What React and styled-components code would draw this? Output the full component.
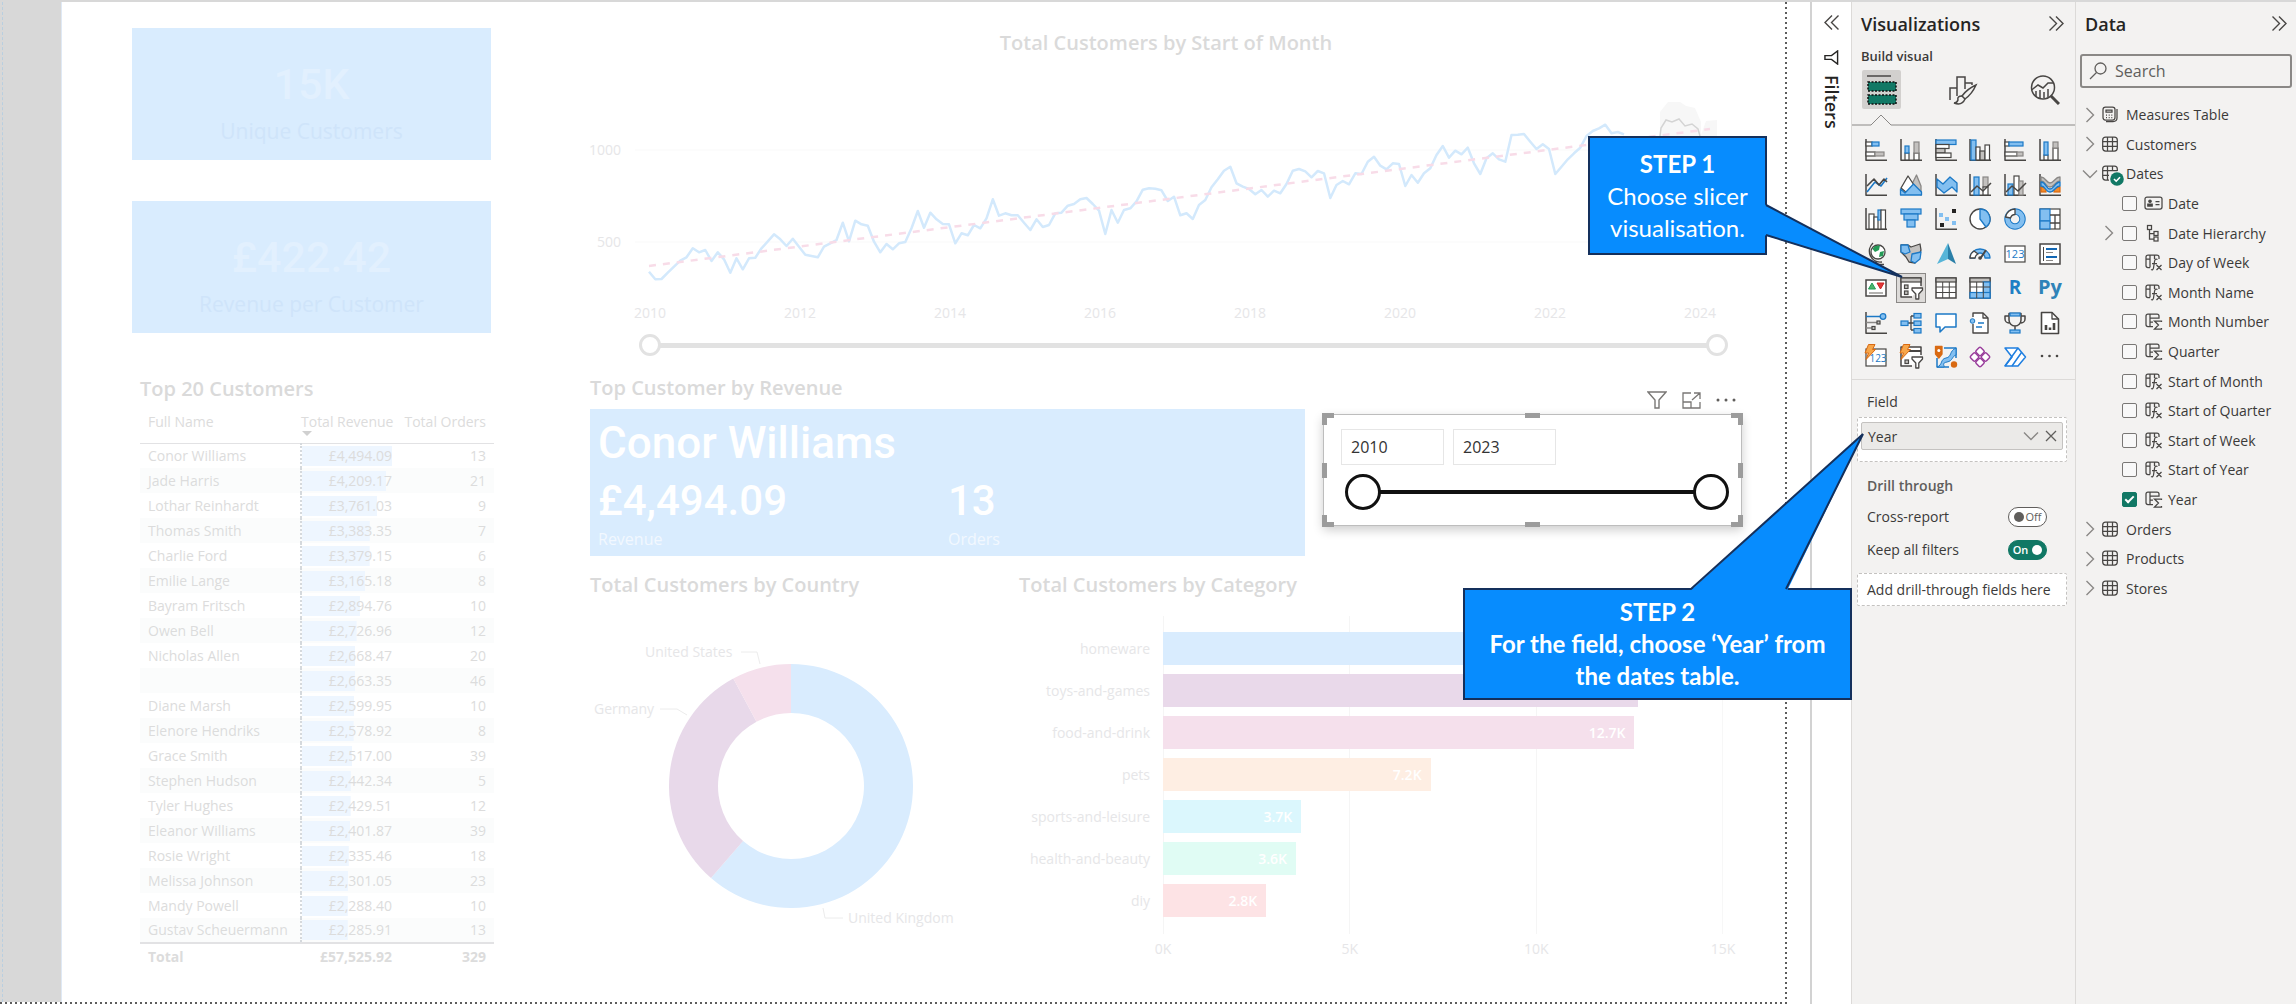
import React from 'react';
import styled, { createGlobalStyle } from 'styled-components';

const ui = '"Open Sans", "Noto Sans", sans-serif';
const din = 'Roboto, "Open Sans", sans-serif';

const c = {
  ink: '#3b3a39',
  pane: '#f3f2f1',
  rule: '#d8d8d8',
  faint: '#e6e6e8',
  fadedTitle: '#dadada',
  blue: '#d9ecfe',
  green: '#117865',
  callout: '#078cfe',
  navy: '#14305c',
};

const GlobalStyle = createGlobalStyle`
  *, *::before, *::after { box-sizing: border-box; }
  body { margin: 0; background: #fff; color: ${c.ink}; font-family: ${ui}; font-size: 14px; }
  button, input { font: inherit; color: inherit; }
  button { padding: 0; border: 0; background: none; display: grid; place-items: center; }
  h1, h2, h3, p, ul { margin: 0; padding: 0; }
  ul { list-style: none; }
`;

const Shell = styled.div`
  position: relative;
  display: flex;
  min-height: 100vh;
  border-top: 2px solid ${c.rule};
`;

/* ---------- report canvas ---------- */

const Canvas = styled.main`
  flex: 1;
  min-width: 0;
  display: flex;
  margin-right: 23px;
  background:
    repeating-linear-gradient(#5c5c5c 0 2px, transparent 2px 5px) right top / 2px 100% no-repeat,
    repeating-linear-gradient(90deg, #5c5c5c 0 2px, transparent 2px 5px) left bottom / 100% 2px no-repeat;
  padding: 0 2px 2px 0;
`;

const Gutter = styled.div`
  flex: none;
  width: 62px;
  background: #d8d8d8;
  border-right: 1px solid #dfe9f5;
  &::before {
    content: '';
    display: block;
    height: 100%;
    margin-left: 2px;
    border-left: 1px dashed #b9cfe0;
  }
`;

const Report = styled.div`
  flex: 1;
  min-width: 0;
  display: grid;
  grid-template-columns: 363px minmax(0, 1fr);
  column-gap: 95px;
  align-content: start;
  padding: 26px 43px 0 70px;
`;

const Title = styled.h2`
  font-size: 20px;
  line-height: 30px;
  font-weight: 600;
  color: ${c.fadedTitle};
  text-align: ${p => (p.$center ? 'center' : 'left')};
  white-space: nowrap;
`;

const Kpi = styled.section`
  height: 132px;
  width: 359px;
  margin-bottom: 41px;
  padding-top: 32px;
  background: ${c.blue};
  text-align: center;
  font-family: ${din};
`;

const KpiValue = styled.p`
  font-size: 43px;
  line-height: 48px;
  font-weight: 500;
  color: #e2f0fe;
`;

const KpiLabel = styled.p`
  margin-top: 11px;
  font-family: ${ui};
  font-size: 21px;
  line-height: 24px;
  color: #cfe4fa;
`;

const CustomerSection = styled.section`
  padding-left: 8px;
`;

const CustomerTable = styled.table`
  width: 354px;
  margin-top: 3px;
  border-collapse: collapse;
  table-layout: fixed;
  color: #dcdcdc;
  th, td { padding: 0 8px; font-weight: 400; text-align: right; white-space: nowrap; line-height: 18px; }
  th:first-child, td:first-child { text-align: left; }
  thead th { height: 36px; vertical-align: top; padding-top: 6px; }
  thead tr { border-bottom: 1px solid #e2e2e4; }
  tbody tr { height: 25px; }
  tbody tr:nth-child(even) { background: #fbfcfc; }
  tfoot tr { border-top: 2px solid #e2e2e4; height: 26px; }
  tfoot td { font-weight: 700; }
  tfoot td:nth-child(2) { padding: 0 4px 0 0; }
`;

const SortHead = styled.span`
  display: block;
  text-align: left;
  line-height: 18px;
  &::after {
    content: '';
    display: block;
    width: 0;
    margin-left: 1px;
    border: 5px solid transparent;
    border-top-color: #d0d0d0;
    border-bottom: 0;
  }
`;

const RevenueHead = styled.th`
  && { padding-left: 0; padding-right: 0; }
`;

const RevenueCell = styled.td`
  && { padding: 0 4px 0 0; }
  border-left: 2px dotted #d5d9dd;
`;

const DataBar = styled.div`
  height: 20px;
  line-height: 20px;
  background: linear-gradient(#eef6ff, #eef6ff) left / 0 100% no-repeat;
`;

const MainColumn = styled.div`
  min-width: 0;
`;

const ChartSvg = styled.svg`
  display: block;
  width: 100%;
  height: ${p => p.$h}px;
  overflow: visible;
  text { font-family: ${ui}; font-size: 14px; fill: ${c.faint}; }
`;

const RangeBox = styled.div`
  position: relative;
  display: grid;
  align-items: center;
  height: ${p => p.$size}px;
  margin: ${p => p.$margin};
  &::before {
    content: '';
    grid-area: 1 / 1;
    height: ${p => p.$track}px;
    margin: 0 ${p => p.$size / 2}px;
    background: ${p => p.$color};
  }
`;

const Range = styled.input`
  grid-area: 1 / 1;
  appearance: none;
  width: 100%;
  height: 100%;
  margin: 0;
  background: transparent;
  pointer-events: none;
  z-index: 1;
  &::-webkit-slider-thumb {
    appearance: none;
    pointer-events: auto;
    width: ${p => p.$size}px;
    height: ${p => p.$size}px;
    border-radius: 50%;
    border: 3px solid ${p => p.$color};
    background: #fff;
  }
`;

const MiddleRow = styled.div`
  display: grid;
  grid-template-columns: minmax(0, 1fr) 419px;
  column-gap: 18px;
  margin-top: 17px;
`;

const CustomerCard = styled.div`
  display: grid;
  grid-template-columns: 350px 1fr;
  align-content: start;
  height: 147px;
  margin-top: 6px;
  padding: 8px 8px 0;
  background: ${c.blue};
  font-family: ${din};
`;

const BigText = styled.p`
  grid-column: ${p => (p.$wide ? '1 / -1' : 'auto')};
  font-size: ${p => (p.$wide ? 44 : 42)}px;
  line-height: ${p => (p.$wide ? 52 : 64)}px;
  font-weight: 500;
  color: #fff;
`;

const SmallText = styled.p`
  font-family: ${ui};
  font-size: 16px;
  line-height: 12px;
  color: #f2f8ff;
`;

const VisualHeader = styled.div`
  display: flex;
  justify-content: flex-end;
  align-items: center;
  gap: 15px;
  height: 41px;
  padding: 13px 6px 0 0;
`;

const Slicer = styled.section`
  position: relative;
  height: 112px;
  padding: 14px 12px 0 17px;
  background: #fff;
  border: 1px solid #bdbdbd;
  box-shadow: 0 4px 10px rgba(0, 0, 0, 0.2);
`;

const YearInputs = styled.div`
  display: flex;
  gap: 9px;
`;

const YearInput = styled.input`
  width: 103px;
  height: 36px;
  padding: 0 9px;
  border: 1px solid #e6e6e6;
  font-size: 16px;
  color: #333;
  outline: 0;
`;

const Handles = styled.svg`
  position: absolute;
  left: -2px;
  top: -2px;
  width: calc(100% + 4px);
  height: calc(100% + 4px);
  pointer-events: none;
`;

const BottomRow = styled.div`
  display: grid;
  grid-template-columns: 429px minmax(0, 1fr);
  margin-top: 14px;
`;

const Plot = styled.div`
  display: flex;
  flex-direction: column;
  gap: 9px;
  height: 318px;
  margin: 16px 19px 0 144px;
  padding-top: 16px;
  border-right: 1px solid #f7f7f7;
  background: repeating-linear-gradient(90deg, #f5f5f5 0 1px, transparent 1px calc(100% / 3));
`;

const PlotRow = styled.div`
  display: flex;
  align-items: center;
  height: 33px;
  margin-left: -144px;
`;

const PlotLabel = styled.span`
  flex: none;
  width: 131px;
  margin-right: 13px;
  text-align: right;
  color: ${c.faint};
`;

const PlotBar = styled.div`
  height: 33px;
  line-height: 33px;
  padding-right: 9px;
  text-align: right;
  font-weight: 600;
  color: #fff;
  background: ${p => p.$color};
`;

const PlotAxis = styled.div`
  display: flex;
  justify-content: space-between;
  margin: 5px 19px 0 144px;
  line-height: 20px;
  color: ${c.faint};
  span { display: flex; justify-content: center; width: 0; }
`;

/* ---------- panes ---------- */

const Filters = styled.aside`
  flex: none;
  width: 41px;
  display: flex;
  flex-direction: column;
  align-items: center;
  border-left: 2px solid #d2d2d2;
  padding-top: 13px;
  background: #fff;
`;

const FiltersTitle = styled.h2`
  writing-mode: vertical-rl;
  margin-top: 10px;
  font-size: 18px;
  line-height: 24px;
  font-weight: 600;
  color: #252423;
`;

const FilterGlyph = styled.svg`
  margin-top: 20px;
`;

const Pane = styled.aside`
  flex: none;
  width: ${p => p.$w}px;
  border-left: 1px solid #dcdad8;
  background: ${c.pane};
`;

const PaneHeader = styled.div`
  display: flex;
  justify-content: space-between;
  align-items: center;
  height: 43px;
  padding: 0 ${p => p.$end}px 0 9px;
`;

const PaneTitle = styled.h2`
  font-size: 18px;
  font-weight: 600;
  color: #252423;
`;

const SubTitle = styled.h3`
  padding-left: 9px;
  margin-top: 1px;
  font-size: 13px;
  line-height: 20px;
  font-weight: 600;
`;

const Tabs = styled.div`
  display: flex;
  justify-content: space-between;
  padding: 4px 11px 0 10px;
`;

const Tab = styled.button`
  width: 39px;
  height: 39px;
  border-radius: 2px;
  background: ${p => (p.$active ? '#d2d0ce' : 'transparent')};
`;

const Notch = styled.svg`
  display: block;
  width: 100%;
  height: 12px;
  margin-top: 5px;
  overflow: visible;
`;

const IconGrid = styled.div`
  display: grid;
  grid-template-columns: repeat(6, 22px);
  grid-auto-rows: 22px;
  justify-content: space-between;
  align-content: space-between;
  height: 229px;
  margin: 13px 14px 11px 13px;
`;

const VizButton = styled.button`
  outline: ${p => (p.$selected ? '1px solid #8a8886' : 'none')};
  outline-offset: 3px;
  background: ${p => (p.$selected ? '#dddbd9' : 'transparent')};
  box-shadow: ${p => (p.$selected ? '0 0 0 3px #dddbd9' : 'none')};
`;

const FieldArea = styled.div`
  padding: 10px 8px 0 5px;
  border-top: 1px solid #dcdad8;
`;

const FieldLabel = styled.h3`
  padding-left: 10px;
  font-size: 14px;
  line-height: 24px;
  font-weight: ${p => (p.$bold ? 600 : 400)};
  color: ${p => (p.$bold ? '#605e5c' : c.ink)};
  margin: ${p => (p.$bold ? '12px 0 2px' : 0)};
`;

const Well = styled.div`
  min-height: ${p => p.$h}px;
  margin-top: ${p => p.$top}px;
  padding: 4px 3px;
  border: 1px dashed #c4c2c0;
  border-radius: 2px;
  background: #fff;
`;

const Chip = styled.div`
  display: flex;
  align-items: center;
  gap: 5px;
  height: 28px;
  padding: 0 4px 0 6px;
  border: 1px solid #c4c2c0;
  border-radius: 2px;
  background: #ebeae8;
  span { flex: 1; }
`;

const Placeholder = styled.p`
  padding-left: 6px;
  line-height: 23px;
  white-space: nowrap;
`;

const ToggleRow = styled.label`
  display: flex;
  justify-content: space-between;
  align-items: center;
  height: 33px;
  padding: 0 20px 0 10px;
`;

const HiddenCheck = styled.input`
  position: absolute;
  opacity: 0;
  width: 1px;
  height: 1px;
`;

const Track = styled.span`
  display: flex;
  flex-direction: ${p => (p.$on ? 'row-reverse' : 'row')};
  align-items: center;
  justify-content: center;
  gap: ${p => (p.$on ? 4 : 2)}px;
  width: 39px;
  height: 20px;
  border: 1px solid ${p => (p.$on ? c.green : '#605e5c')};
  border-radius: 10px;
  background: ${p => (p.$on ? c.green : '#fff')};
  color: ${p => (p.$on ? '#fff' : '#605e5c')};
  font-size: 11px;
  font-weight: ${p => (p.$on ? 600 : 400)};
  &::before {
    content: '';
    width: 10px;
    height: 10px;
    border-radius: 50%;
    background: ${p => (p.$on ? '#fff' : '#605e5c')};
  }
`;

const SearchBox = styled.label`
  display: flex;
  align-items: center;
  gap: 8px;
  height: 34px;
  margin: 9px 4px 12px 4px;
  padding-left: 7px;
  border: 2px solid #8a8886;
  border-radius: 3px;
  background: ${c.pane};
  input { flex: 1; min-width: 0; padding: 0; border: 0; outline: 0; background: transparent; font-size: 16px; }
  input::placeholder { color: #605e5c; opacity: 1; }
`;

const Tree = styled.ul`
  display: grid;
  grid-auto-rows: 1fr;
  height: 503px;
`;

const TreeRow = styled.li`
  display: flex;
  align-items: center;
  padding-left: ${p => (p.$child ? 24 : 5)}px;
  white-space: nowrap;
`;

const Chevron = styled.button`
  width: 18px;
  height: 20px;
`;

const TreeName = styled.span`
  display: flex;
  align-items: center;
  gap: 7px;
  margin-left: 3px;
`;

const FieldName = styled.label`
  display: flex;
  align-items: center;
  gap: 6px;
  margin-left: 4px;
  input + svg { margin-left: 2px; }
`;

const Check = styled.input`
  appearance: none;
  width: 15px;
  height: 15px;
  margin: 0;
  border: 1px solid #797775;
  border-radius: 2px;
  background: #f8f8f8;
  &:checked {
    border-color: ${c.green};
    background: ${c.green};
    display: grid;
    place-items: center;
  }
  &:checked::after {
    content: '';
    width: 9px;
    height: 5px;
    border: solid #fff;
    border-width: 0 0 2px 2px;
    transform: translateY(-1px) rotate(-45deg);
  }
`;

/* ---------- callouts ---------- */

const Callout = styled.div`
  position: absolute;
  z-index: 5;
  top: ${p => p.$top}px;
  right: ${p => p.$right}px;
  width: ${p => p.$w}px;
  height: ${p => p.$h}px;
  padding-top: ${p => p.$pad}px;
  border: 2px solid ${c.navy};
  background: ${c.callout};
  color: #fff;
  font-family: Lato, "Open Sans", sans-serif;
  font-size: 24px;
  line-height: 32px;
  text-align: center;
  font-weight: ${p => (p.$bold ? 700 : 400)};
  strong { display: block; font-weight: 700; }
`;

const Pointer = styled.svg`
  position: absolute;
  top: 0;
  left: ${p => (p.$side ? '100%' : 0)};
  width: 10px;
  height: 10px;
  overflow: visible;
  pointer-events: none;
`;

/* ---------- icons ---------- */

const K = '#484644';
const B = '#83bff0';
const BS = '#1c79c6';
const G = '#c3c1bf';

const Rc = ({ b, f = 'none', s = K, w = 1.2 }) => (
  <rect x={b[0]} y={b[1]} width={b[2]} height={b[3]} fill={f} stroke={s} strokeWidth={w} />
);
const Pt = ({ d, f = 'none', s = K, w = 1.3 }) => (
  <path d={d} fill={f} stroke={s} strokeWidth={w} strokeLinejoin="round" />
);
const Axis = () => <Pt d="M1 0V21.3H22" w={1.5} />;
const Bolt = () => <Pt d="M3.500-1.500H10L7.500 3.500H10.500L1 13.500L3.500 7H0Z" f="#f7a64a" s="#d96a12" w={1} />;
const Funnel = ({ x = 0, y = 0 }) => (
  <g transform={`translate(${x} ${y})`}>
    <Pt d="M0 0H10.500V2L6.800 6V11H3.800V6L0 2Z" f="#fff" />
  </g>
);

const vizIcons = [
  ['Stacked bar chart', <><Axis /><Rc b={[1, 3, 6, 4]} f="#fff" /><Rc b={[7, 3, 7, 4]} f={B} s={BS} /><Rc b={[1, 13, 9, 4]} f="#fff" /><Rc b={[10, 13, 9, 4]} f={G} s="#8a8886" /></>],
  ['Stacked column chart', <><Axis /><Rc b={[5, 14, 4, 7]} f="#fff" /><Rc b={[5, 7, 4, 7]} f={B} s={BS} /><Rc b={[14, 14, 5, 7]} f="#fff" /><Rc b={[14, 3, 5, 11]} f={G} s="#8a8886" /></>],
  ['Clustered bar chart', <><Axis /><Rc b={[1, 1, 20, 4.5]} f={B} s={BS} /><Rc b={[1, 5.5, 13, 4]} f="#fff" /><Rc b={[1, 9.5, 9, 4.5]} f={G} /><Rc b={[1, 14, 15, 4.5]} f="#fff" /></>],
  ['Clustered column chart', <><Axis /><Rc b={[2, 1, 5, 20]} f={B} s={BS} /><Rc b={[7, 8, 4, 13]} f="#fff" /><Rc b={[11, 12, 5, 9]} f={G} /><Rc b={[16, 6, 4.5, 15]} f="#fff" /></>],
  ['100% stacked bar chart', <><Axis /><Rc b={[1, 3, 4, 4]} f="#fff" /><Rc b={[5, 3, 14, 4]} f={B} s={BS} /><Rc b={[1, 13, 12, 4]} f="#fff" /><Rc b={[13, 13, 6, 4]} f={G} s="#8a8886" /></>],
  ['100% stacked column chart', <><Axis /><Rc b={[5, 16, 4, 5]} f="#fff" /><Rc b={[5, 3, 4, 13]} f={B} s={BS} /><Rc b={[14, 9, 5, 12]} f="#fff" /><Rc b={[14, 3, 5, 6]} f={G} s="#8a8886" /></>],
  ['Line chart', <><Axis /><Pt d="M2 18L10 8L16 12L22 4" s={BS} w={1.6} /><Pt d="M2 12L9 5L14 11L19 5L22 8" w={1.6} /></>],
  ['Area chart', <><Pt d="M10 14L16.500 1L21 12V21Z" f={G} s="#8a8886" /><Pt d="M1 14L8 2L14 11L7 19Z" f="#fff" /><Pt d="M0.500 21V15L5 19L13.500 10L21.500 18V21Z" f={B} s={BS} /></>],
  ['Stacked area chart', <><Axis /><Pt d="M2 5L8 10L15 3L22 9V18L17 13L9 19L2 13Z" f={B} s={BS} /></>],
  ['Line and stacked column chart', <><Axis /><Rc b={[5, 3, 5, 18]} f={B} s={BS} /><Rc b={[14, 3, 5, 10]} f={G} s="#8a8886" /><Rc b={[14, 13, 5, 8]} f="#fff" /><Pt d="M2 18L8 12L14 17L22 9" w={1.5} /></>],
  ['Line and clustered column chart', <><Axis /><Rc b={[4, 10, 5, 11]} f={B} s={BS} /><Rc b={[10, 2, 5, 19]} f="#fff" /><Rc b={[15, 7, 4, 14]} f={G} s="#8a8886" /><Pt d="M2 18L8 12L14 17L22 9" w={1.5} /></>],
  ['Ribbon chart', <><Axis /><Rc b={[2, 13, 5, 5]} f="#f28a2a" s="#d96a12" /><Rc b={[15, 13, 6, 5]} f="#f28a2a" s="#d96a12" /><Pt d="M2 3C7 3 7 9 11 9S16 3 21 3V7C16 7 16 13 11 13S7 7 2 7Z" f={G} s="#8a8886" /><Pt d="M2 8C7 8 7 15 11 15S16 8 21 8V12C16 12 16 18 11 18S7 12 2 12Z" f={B} s={BS} /></>],
  ['Waterfall chart', <><Axis /><Rc b={[4, 6, 5, 15]} f="#fff" /><Rc b={[9, 9, 4, 12]} f="#fff" /><Rc b={[13, 2, 3, 10]} f={B} s={BS} /><Rc b={[16, 2, 4.5, 19]} f="#fff" /></>],
  ['Funnel chart', <><Rc b={[1, 1, 20, 5]} f={B} s={BS} /><Rc b={[4, 6, 14, 6]} f={B} s={BS} /><Rc b={[7, 12, 8, 7]} f={B} s={BS} /></>],
  ['Scatter chart', <><Axis /><rect x="17" y="1" width="4" height="4" fill="#252423" /><rect x="5" y="15" width="4" height="4" fill="#252423" /><rect x="4" y="5" width="4" height="4" fill={B} /><rect x="10" y="9" width="4" height="4" fill={B} /><rect x="17" y="13" width="4" height="4" fill={B} /></>],
  ['Pie chart', <><circle cx="11" cy="11" r="10" fill="#fff" stroke={K} strokeWidth="1.4" /><Pt d="M11 1A10 10 0 0 1 17 19L11 11Z" f={B} s={BS} /></>],
  ['Donut chart', <><circle cx="11" cy="11" r="7.5" fill="none" stroke={BS} strokeWidth="6.5" /><circle cx="11" cy="11" r="7.5" fill="none" stroke={B} strokeWidth="4.5" /><Pt d="M11 1A10 10 0 0 0 1.500 9L6.500 10A5 5 0 0 1 11 6.500Z" f="#fff" /></>],
  ['Treemap', <><Rc b={[1, 1, 20, 20]} f="#fff" /><Rc b={[1, 1, 10, 12]} f={B} s={BS} /><Rc b={[1, 13, 10, 8]} f={B} s={BS} /><Pt d="M11 7H21M16 7V15M11 15H21M16 15V21" /></>],
  ['Map', <><circle cx="13" cy="9" r="7" fill="#fff" stroke={K} strokeWidth="1.3" /><Pt d="M10 3L15 2.500L14 7L10 9L7.500 6ZM15 9L19 8L18 13L14 14Z" f="#249a56" s="none" /><Pt d="M8 0A11 11 0 0 0 17 19M11 18V21M6 21.500H19" w={1.5} /></>],
  ['Filled map', <><Pt d="M1 2H8L11 4L20 1L21 7L19 13L15 20L9 19L6 14L1 9Z" f={G} /><Pt d="M1 2H8L10 9L5 11L1 9Z" f={B} s={BS} /><Pt d="M12 11L21 9L20 16L15 20L11 18Z" f={B} s={BS} /></>],
  ['Azure map', <><path d="M13 0L2 21L13 16Z" fill="#57b5d8" /><path d="M13 0L21 21L13 16Z" fill="#2a7fa8" /></>],
  ['Gauge', <><Pt d="M1 15A10 9 0 0 1 21 15H16A5 5 0 0 0 6 15Z" f={B} s={BS} /><Pt d="M1 15A10 9 0 0 1 5 8L9 11A5 5 0 0 0 6 15Z" f="#fff" /><Pt d="M11 16L17 7" w={2} /><circle cx="11" cy="15" r="1.8" fill={K} /></>],
  ['Card', <><Rc b={[1, 3, 20, 16]} f="#fff" /><text x="11" y="15" textAnchor="middle" fontSize="11" fill={BS}>123</text></>],
  ['Multi-row card', <><Rc b={[1, 1, 20, 20]} f="#fff" w={1.5} /><Pt d="M4.500 4V18" w={1} /><Pt d="M7 6H18M7 14H18" s="#1267b4" w={2.2} /><Pt d="M7 9.500H14M7 17.500H14" s="#8a8886" w={1.2} /></>],
  ['KPI', <><Rc b={[1, 3, 20, 16]} f="#fff" w={1.5} /><Pt d="M3.500 12L7 6L10.500 12Z" f="#4cb36b" s="#249a56" w={1} /><Pt d="M12 6H19L15.500 12Z" f="#e23838" s="#c22" w={1} /><Pt d="M4 16H18" s="#8a8886" /></>],
  ['Slicer', <><Pt d="M12 20H1V1H21V9" f="#fff" w={1.5} /><rect x="1" y="1" width="20" height="4" fill={G} stroke={K} strokeWidth="1.2" /><Rc b={[4.5, 8, 3.5, 3.5]} f={G} /><Rc b={[4.5, 14, 3.5, 3.5]} f={G} /><Funnel x={12} y={11} /></>],
  ['Table', <><Rc b={[1, 1, 20, 20]} f="#fff" w={1.5} /><Rc b={[1, 1, 20, 4]} f={G} /><Pt d="M1 10H21M1 15.500H21M7.700 5V21M14.300 5V21" w={1} /></>],
  ['Matrix', <><Rc b={[1, 1, 20, 20]} f="#fff" w={1.5} /><Rc b={[1, 1, 20, 4]} f={G} /><Rc b={[14.3, 5, 6.7, 16]} f={B} s={BS} /><Rc b={[1, 15.5, 20, 5.5]} f={B} s={BS} /><Pt d="M1 10H21M7.700 5V21M14.300 5V21" w={1} /></>],
  ['R script visual', <text x="11" y="17" textAnchor="middle" fontSize="19" fontWeight="700" fill="#1f7fc4">R</text>],
  ['Python visual', <text x="11" y="17" textAnchor="middle" fontSize="20" fontWeight="700" fill="#2f83b8">Py</text>],
  ['Key influencers', <><Axis /><Pt d="M1 4.500H16" s={BS} w={1.5} /><circle cx="18" cy="4.5" r="2.8" fill={B} stroke={BS} strokeWidth="1.3" /><Pt d="M1 10.500H12M1 16H7" s="#8a8886" /><Rc b={[12, 9, 3, 3]} f={G} /><Rc b={[7, 14.5, 3, 3]} f={G} /></>],
  ['Decomposition tree', <><Pt d="M8 11H14M11 4V18M11 4H14M11 18H14" /><Rc b={[1, 9, 7, 4.5]} f={B} s={BS} /><Rc b={[14, 1.5, 7, 4.5]} f={B} s={BS} /><Rc b={[14, 9, 7, 4.5]} f={B} s={BS} /><Rc b={[14, 16.5, 7, 4.5]} f={B} s={BS} /></>],
  ['Q&A', <Pt d="M1 2H21V15H10L5 20V15H1Z" f="#fff" s={BS} w={1.5} />],
  ['Smart narrative', <><Pt d="M4 5V1H14L19 6V21H4V12" f="#fff" w={1.4} /><Pt d="M14 1V6H19" /><circle cx="3.5" cy="9" r="2.3" fill={B} stroke={BS} /><Pt d="M9 11H15M7 15H13" s={BS} w={1.5} /></>],
  ['Goals', <><Pt d="M5 1.500H17V8A6 6 0 0 1 5 8ZM5 4H1V7A4 4 0 0 0 5 11M17 4H21V7A4 4 0 0 1 17 11M11 14V18" w={1.5} /><Rc b={[6, 1, 10, 3]} f={B} s={BS} /><Rc b={[6, 18, 10, 3]} f={B} s={BS} /></>],
  ['Paginated report', <><Pt d="M2.500 0.500H13L19.500 7V21.500H2.500Z" f="#fff" w={1.6} /><Pt d="M13 0.500V7H19.500" /><Pt d="M7 18V13M11 18V15.500M15 18V11" w={2.6} /></>],
  ['New card', <><Rc b={[1, 3, 20, 17]} f="#fff" /><text x="13" y="16" textAnchor="middle" fontSize="10" fill={BS}>123</text><Bolt /></>],
  ['New slicer', <><Pt d="M12 20H1V1H21V9" f="#fff" w={1.5} /><Pt d="M8 5H21" w={2} /><Rc b={[5, 14, 3.5, 3.5]} f={G} /><Funnel x={12} y={11} /><Bolt /></>],
  ['ArcGIS map', <><Pt d="M9 2H21V12M2 12V21H14" s={BS} w={1.5} /><Pt d="M2 21C8 19 5 13 11 12S14 5 21 2V9C17 10 18 15 12 16S10 20 9 21Z" f={B} s={BS} w={1} /><Pt d="M0.500 0.500H7V8L3.800 12L0.500 8Z" f="#d96a12" s="#d96a12" /><circle cx="3.8" cy="4.5" r="1.5" fill="#fff" /><circle cx="19" cy="18.5" r="3.2" fill="#d96a12" /></>],
  ['Power Apps', <g stroke="#9a3f9c" strokeWidth="1.5" fill="#fff"><rect x="-3.4" y="-3.4" width="6.8" height="6.8" rx="1.5" transform="translate(11 5.5) rotate(45)" /><rect x="-3.4" y="-3.4" width="6.8" height="6.8" rx="1.5" transform="translate(5.5 11) rotate(45)" /><rect x="-3.4" y="-3.4" width="6.8" height="6.8" rx="1.5" transform="translate(16.5 11) rotate(45)" /><rect x="-3.4" y="-3.4" width="6.8" height="6.8" rx="1.5" transform="translate(11 16.5) rotate(45)" /></g>],
  ['Power Automate', <><Pt d="M1 2H14L21.500 11L14 20H1L8 11Z" f="#fff" s="#1f7fe0" w={1.5} /><Pt d="M14 2L1 20M17.500 6.500L8 20" s="#1f7fe0" w={1.5} /></>],
  ['More visuals', <><circle cx="3" cy="10" r="1.3" fill={K} /><circle cx="10.5" cy="10" r="1.3" fill={K} /><circle cx="18" cy="10" r="1.3" fill={K} /></>],
];

const Icon = ({ children }) => (
  <svg width="22" height="22" viewBox="0 0 22 22" overflow="visible" fill="none" aria-hidden="true">{children}</svg>
);

const Double = ({ left }) => (
  <svg width="15" height="15" viewBox="0 0 15 15" fill="none" stroke="#484644" strokeWidth="1.4" aria-hidden="true">
    <path d={left ? 'M8 0.500L1 7.500L8 14.500M14.500 0.500L7.500 7.500L14.500 14.500' : 'M0.500 0.500L7.500 7.500L0.500 14.500M7 0.500L14 7.500L7 14.500'} />
  </svg>
);

const Chev = ({ down }) => (
  <svg width="16" height="16" viewBox="0 0 16 16" fill="none" stroke="#8a8886" strokeWidth="1.4" aria-hidden="true">
    <path d={down ? 'M1 4.500L8 11.500L15 4.500' : 'M4.500 1L11.500 8L4.500 15'} />
  </svg>
);

const typeIcons = {
  measure: <><rect x="1" y="1" width="12" height="13" rx="2.5" /><path d="M15 3V12Q15 15.500 11 15.500H4M4 4H10V6H4Z" /><path d="M4 9H5M6.700 9H7.700M9.300 9H10.300M4 11.500H5M6.700 11.500H7.700M9.300 11.500H10.300" /></>,
  table: <><rect x="0.7" y="1" width="14.6" height="14" rx="3" /><path d="M5.500 1V15M10.500 1V15M0.700 5.700H15.300M0.700 10.300H15.300" /></>,
  dates: <><path d="M7 15H3.500Q0.700 15 0.700 12V4Q0.700 1 3.500 1H12.500Q15.300 1 15.300 4V6M5.500 1V15M10.500 1V6M0.700 5.700H15.300M0.700 10.300H7" /><circle cx="15" cy="14" r="6.8" fill={c.green} stroke="none" /><path d="M12 14L14.200 16.200L18 12.200" stroke="#fff" strokeWidth="1.6" /></>,
  card: <><rect x="0" y="2" width="17" height="12" rx="2" /><path d="M10.500 6.500H14.500M10.500 9.500H14.500" /><circle cx="5" cy="6.2" r="1.2" fill={K} /><path d="M2.800 11V9H7.200V11Z" fill={K} /></>,
  hierarchy: <><rect x="2.5" y="0.5" width="4" height="4" /><path d="M4.500 4.500V14H9M4.500 8.500H9" /><rect x="9" y="6.5" width="4" height="4" /><rect x="9" y="12" width="4" height="4" /></>,
  fx: <><path d="M5 13.500H3Q1 13.500 1 11.500V3Q1 1 3 1H12Q14 1 14 3V5M5 1V13.500M1 5H5M9.500 1V5" /><path d="M12.500 5.500Q10 4 9.500 7.500L8.500 14Q8 16.500 6 15.500M7 9.500H12M11.500 11L16.500 16M16.500 11L11.500 16" /></>,
  sum: <><path d="M8 13.500H3Q1 13.500 1 11.500V3Q1 1 3 1H12Q14 1 14 3V5H5M5 1V13.500M5 9H8" /><path d="M16.500 9V8H9.500L13.500 12L9.500 16H16.500V15" /></>,
};

const TypeIcon = ({ type }) => (
  <svg width="17" height="17" viewBox="0 0 17 17" fill="none" stroke={K} strokeWidth="1.25" overflow="visible" aria-hidden="true">{typeIcons[type]}</svg>
);

/* ---------- data ---------- */

const customers = [
  ['Conor Williams', 4494.09, 13], ['Jade Harris', 4209.17, 21], ['Lothar Reinhardt', 3761.03, 9],
  ['Thomas Smith', 3383.35, 7], ['Charlie Ford', 3379.15, 6], ['Emilie Lange', 3165.18, 8],
  ['Bayram Fritsch', 2894.76, 10], ['Owen Bell', 2726.96, 12], ['Nicholas Allen', 2668.47, 20],
  ['', 2663.35, 46], ['Diane Marsh', 2599.95, 10], ['Elenore Hendriks', 2578.92, 8],
  ['Grace Smith', 2517.0, 39], ['Stephen Hudson', 2442.34, 5], ['Tyler Hughes', 2429.51, 12],
  ['Eleanor Williams', 2401.87, 39], ['Rosie Wright', 2335.46, 18], ['Melissa Johnson', 2301.05, 23],
  ['Mandy Powell', 2288.4, 10], ['Gustav Scheuermann', 2285.91, 13],
];

const money = n => '£' + n.toLocaleString('en-GB', { minimumFractionDigits: 2, maximumFractionDigits: 2 });

/* Monthly heights of the customer line, January 2010 onwards, in thirds of a unit. */
const monthly = [
  815, 838, 837, 818, 800, 782, 772, 745, 757, 750, 783, 757, 778, 818, 775, 808, 775, 773, 745, 724,
  703, 718, 738, 716, 740, 764, 768, 772, 740, 730, 720, 668, 724, 662, 673, 677, 725, 757, 732, 748,
  730, 726, 685, 633, 683, 638, 658, 672, 673, 730, 700, 706, 675, 685, 655, 598, 647, 640, 646, 646,
  668, 690, 658, 681, 675, 640, 638, 617, 612, 598, 594, 612, 632, 702, 630, 668, 630, 625, 604, 569,
  565, 566, 571, 603, 590, 646, 640, 657, 615, 600, 562, 538, 512, 500, 550, 560, 567, 583, 570, 590,
  572, 580, 552, 512, 507, 514, 532, 513, 520, 594, 555, 543, 553, 520, 522, 485, 470, 497, 508, 490,
  492, 558, 525, 548, 520, 505, 465, 438, 473, 452, 463, 443, 490, 522, 475, 460, 478, 485, 405, 404,
  402, 425, 447, 433, 447, 522, 500, 478, 460, 443, 408, 393, 385, 374, 400, 396, 403,
];
const linePoints = monthly.map((y, i) => `${(649 + i * 6.25).toFixed(1)},${(y / 3).toFixed(1)}`).join(' ');

const categories = [
  ['homeware', 13.9, '#d9ecfe'], ['toys-and-games', 12.75, '#e9d9ea'], ['food-and-drink', 12.65, '#f5e0ec', '12.7K'],
  ['pets', 7.18, '#feeee3', '7.2K'], ['sports-and-leisure', 3.71, '#dbf7fd', '3.7K'],
  ['health-and-beauty', 3.57, '#e0fcf4', '3.6K'], ['diy', 2.77, '#fde3e5', '2.8K'],
];

const arc = (from, to, color) => {
  const at = (deg, r) => {
    const a = (deg * Math.PI) / 180;
    return `${(791 + r * Math.sin(a)).toFixed(1)} ${(786 - r * Math.cos(a)).toFixed(1)}`;
  };
  const big = to - from > 180 ? 1 : 0;
  return <path d={`M${at(from, 122)}A122 122 0 ${big} 1 ${at(to, 122)}L${at(to, 73)}A73 73 0 ${big} 0 ${at(from, 73)}Z`} fill={color} />;
};

const tree = [
  { name: 'Measures Table', type: 'measure' },
  { name: 'Customers', type: 'table' },
  { name: 'Dates', type: 'dates', open: true },
  { name: 'Date', type: 'card', child: true },
  { name: 'Date Hierarchy', type: 'hierarchy', child: true, expandable: true },
  { name: 'Day of Week', type: 'fx', child: true },
  { name: 'Month Name', type: 'fx', child: true },
  { name: 'Month Number', type: 'sum', child: true },
  { name: 'Quarter', type: 'sum', child: true },
  { name: 'Start of Month', type: 'fx', child: true },
  { name: 'Start of Quarter', type: 'fx', child: true },
  { name: 'Start of Week', type: 'fx', child: true },
  { name: 'Start of Year', type: 'fx', child: true },
  { name: 'Year', type: 'sum', child: true, checked: true },
  { name: 'Orders', type: 'table' },
  { name: 'Products', type: 'table' },
  { name: 'Stores', type: 'table' },
];

/* ---------- parts ---------- */

const DualRange = ({ size, track, color, margin, label }) => (
  <RangeBox $size={size} $track={track} $color={color} $margin={margin}>
    <Range type="range" min="2010" max="2023" defaultValue="2010" $size={size} $color={color} aria-label={`${label} from`} />
    <Range type="range" min="2010" max="2023" defaultValue="2023" $size={size} $color={color} aria-label={`${label} to`} />
  </RangeBox>
);

const Customers = () => (
  <CustomerSection>
    <Title>Top 20 Customers</Title>
    <CustomerTable>
      <colgroup><col width="161" /><col width="95" /><col width="98" /></colgroup>
      <thead>
        <tr><th>Full Name</th><RevenueHead><SortHead>Total Revenue</SortHead></RevenueHead><th>Total Orders</th></tr>
      </thead>
      <tbody>
        {customers.map(([name, revenue, orders]) => (
          <tr key={revenue}>
            <td>{name}</td>
            <RevenueCell><DataBar style={{ backgroundSize: `${(revenue / 44.9409).toFixed(1)}% 100%` }}>{money(revenue)}</DataBar></RevenueCell>
            <td>{orders}</td>
          </tr>
        ))}
      </tbody>
      <tfoot><tr><td>Total</td><td>£57,525.92</td><td>329</td></tr></tfoot>
    </CustomerTable>
  </CustomerSection>
);

const LineChart = () => (
  <ChartSvg $h={276} viewBox="590 58 1152 276" role="img" aria-label="Total customers by start of month">
    <path d="M635 150H1728M635 242H1728" stroke="#f9f9f9" />
    <text x="621" y="155" textAnchor="end">1000</text>
    <text x="621" y="247" textAnchor="end">500</text>
    <path d="M1660 150V112L1668 102H1680L1686 106L1695 108L1701 122V135L1706 121L1717 120V150Z" fill="#f7f7f7" />
    <polyline points={linePoints} fill="none" stroke="#d3e9fc" strokeWidth="2.5" strokeLinejoin="round" />
    <path d="M649 266L1710 129" stroke="#f8dce8" strokeWidth="2.5" strokeDasharray="7 7" />
    <path d="M1660 136L1661 128L1666 120L1672 122L1679 119L1685 126L1692 124L1698 129L1700 136" fill="none" stroke="#d4d4d4" strokeWidth="1.5" />
    {[2010, 2012, 2014, 2016, 2018, 2020, 2022, 2024].map((y, i) => (
      <text key={y} x={650 + i * 150} y="318" textAnchor="middle">{y}</text>
    ))}
  </ChartSvg>
);

const Donut = () => (
  <ChartSvg $h={340} viewBox="590 600 429 340" role="img" aria-label="Total customers by country">
    {arc(0, 221, '#d9ecfe')}
    {arc(221, 331.8, '#e8d9ea')}
    {arc(331.8, 360, '#f5e0ec')}
    <path d="M741 652H757L760 664M660 709H677L687 715M823 908L825 918H843" stroke="#ececec" fill="none" />
    <text x="645" y="657">United States</text>
    <text x="594" y="714">Germany</text>
    <text x="848" y="923">United Kingdom</text>
  </ChartSvg>
);

const CategoryChart = () => (
  <section>
    <Title>Total Customers by Category</Title>
    <Plot>
      {categories.map(([name, value, color, text]) => (
        <PlotRow key={name}>
          <PlotLabel>{name}</PlotLabel>
          <PlotBar $color={color} style={{ width: `calc((100% - 144px) * ${value / 15})` }}>{text}</PlotBar>
        </PlotRow>
      ))}
    </Plot>
    <PlotAxis><span>0K</span><span>5K</span><span>10K</span><span>15K</span></PlotAxis>
  </section>
);

const YearSlicer = () => (
  <div>
    <VisualHeader>
      <button aria-label="Filters on visual"><svg width="20" height="18" viewBox="0 0 20 18" fill="none" stroke="#797775" strokeWidth="1.4"><path d="M1 1H19L12 9V17H8V9Z" /></svg></button>
      <button aria-label="Focus mode"><svg width="19" height="17" viewBox="0 0 19 17" fill="none" stroke="#797775" strokeWidth="1.3"><path d="M9 1H1V16H18V10M1 10H9V16M12 1H18V7M18 1L10 8" /></svg></button>
      <button aria-label="More options"><svg width="20" height="17" viewBox="0 0 20 17" fill="#605e5c"><circle cx="2" cy="8" r="1.5" /><circle cx="10" cy="8" r="1.5" /><circle cx="18" cy="8" r="1.5" /></svg></button>
    </VisualHeader>
    <Slicer>
      <YearInputs>
        <YearInput defaultValue="2010" aria-label="Start year" />
        <YearInput defaultValue="2023" aria-label="End year" />
      </YearInputs>
      <DualRange size={36} track={4} color="#111" margin="9px 0 0 4px" label="Year" />
      <Handles viewBox="0 0 421 114" preserveAspectRatio="none" fill="none" stroke="#9c9c9c" strokeWidth="5">
        <path d="M2.500 12V2.500H12M409 2.500H418.500V12M418.500 102V111.500H409M12 111.500H2.500V102M203 2.500H218M203 111.500H218M2.500 50V65M418.500 50V65" />
      </Handles>
    </Slicer>
  </div>
);

const VisualizationsPane = () => (
  <Pane $w={224}>
    <PaneHeader $end={11}>
      <PaneTitle>Visualizations</PaneTitle>
      <button aria-label="Collapse visualizations"><Double /></button>
    </PaneHeader>
    <SubTitle>Build visual</SubTitle>
    <Tabs>
      <Tab $active aria-label="Build visual">
        <svg width="32" height="32" viewBox="0 0 32 32"><path d="M1 2H25" stroke={K} strokeWidth="1.5" /><rect x="2" y="8" width="28" height="9" fill={c.green} stroke="#111" strokeWidth="1.5" strokeDasharray="2 1.5" /><rect x="2" y="21" width="28" height="9" fill={c.green} stroke="#111" strokeWidth="1.5" strokeDasharray="2 1.5" /></svg>
      </Tab>
      <Tab aria-label="Format visual">
        <svg width="30" height="30" viewBox="0 0 30 30" fill="none" stroke={K} strokeWidth="1.5"><path d="M2 25V13H9V21M9 13V2H17V14M17 8H24V10" /><path d="M28 10Q19 14 14 21L17 24Q24 19 28 10Z" fill={c.pane} /><path d="M14 21Q9 21 10 25Q9 28 6 28Q14 31 17 24" /></svg>
      </Tab>
      <Tab aria-label="Analytics">
        <svg width="30" height="30" viewBox="0 0 30 30" fill="none" stroke={K} strokeWidth="1.5"><circle cx="13" cy="12.5" r="11.5" /><path d="M1.500 15L8 10L13 13L18 8L24 8M6 22V16M10 23V15M14 23V17M18 22V14" /><path d="M21 21L29 29" strokeWidth="3" /></svg>
      </Tab>
    </Tabs>
    <Notch viewBox="0 0 223 12" preserveAspectRatio="none" fill="none" stroke="#8a8886"><path d="M0 11H19L29 1L39 11H223" /></Notch>
    <IconGrid>
      {vizIcons.map(([name, art]) => (
        <VizButton key={name} aria-label={name} $selected={name === 'Slicer'}><Icon>{art}</Icon></VizButton>
      ))}
    </IconGrid>
    <FieldArea>
      <FieldLabel>Field</FieldLabel>
      <Well $h={45} $top={3}>
        <Chip>
          <span>Year</span>
          <button aria-label="Field options"><Chev down /></button>
          <button aria-label="Remove field"><svg width="14" height="14" viewBox="0 0 14 14" stroke="#605e5c" strokeWidth="1.3"><path d="M2 2L12 12M12 2L2 12" /></svg></button>
        </Chip>
      </Well>
      <FieldLabel $bold>Drill through</FieldLabel>
      <ToggleRow>Cross-report<HiddenCheck type="checkbox" /><Track>Off</Track></ToggleRow>
      <ToggleRow>Keep all filters<HiddenCheck type="checkbox" defaultChecked /><Track $on>On</Track></ToggleRow>
      <Well $h={32} $top={7}><Placeholder>Add drill-through fields here</Placeholder></Well>
    </FieldArea>
  </Pane>
);

const DataPane = () => (
  <Pane $w={221}>
    <PaneHeader $end={9}>
      <PaneTitle>Data</PaneTitle>
      <button aria-label="Collapse data"><Double /></button>
    </PaneHeader>
    <SearchBox>
      <svg width="18" height="18" viewBox="0 0 18 18" fill="none" stroke="#605e5c" strokeWidth="1.3" aria-hidden="true"><circle cx="11.5" cy="6.5" r="5.5" /><path d="M7.500 10.500L1 17" /></svg>
      <input type="search" placeholder="Search" aria-label="Search" />
    </SearchBox>
    <Tree>
      {tree.map(item => (
        <TreeRow key={item.name} $child={item.child}>
          <Chevron aria-label={`Expand ${item.name}`} style={{ visibility: item.child && !item.expandable ? 'hidden' : 'visible' }}>
            <Chev down={item.open} />
          </Chevron>
          {item.child ? (
            <FieldName><Check type="checkbox" defaultChecked={item.checked} /><TypeIcon type={item.type} />{item.name}</FieldName>
          ) : (
            <TreeName><TypeIcon type={item.type} />{item.name}</TreeName>
          )}
        </TreeRow>
      ))}
    </Tree>
  </Pane>
);

export default function App() {
  return (
    <>
      <GlobalStyle />
      <Shell>
        <Canvas>
          <Gutter />
          <Report>
            <div>
              <Kpi><KpiValue>15K</KpiValue><KpiLabel>Unique Customers</KpiLabel></Kpi>
              <Kpi><KpiValue>£422.42</KpiValue><KpiLabel>Revenue per Customer</KpiLabel></Kpi>
              <Customers />
            </div>
            <MainColumn>
              <Title $center>Total Customers by Start of Month</Title>
              <LineChart />
              <DualRange size={22} track={5} color="#e2e2e2" margin="0 14px 0 49px" label="Month" />
              <MiddleRow>
                <section>
                  <Title>Top Customer by Revenue</Title>
                  <CustomerCard>
                    <BigText $wide>Conor Williams</BigText>
                    <BigText>£4,494.09</BigText>
                    <BigText>13</BigText>
                    <SmallText>Revenue</SmallText>
                    <SmallText>Orders</SmallText>
                  </CustomerCard>
                </section>
                <YearSlicer />
              </MiddleRow>
              <BottomRow>
                <section><Title>Total Customers by Country</Title><Donut /></section>
                <CategoryChart />
              </BottomRow>
            </MainColumn>
          </Report>
        </Canvas>
        <Filters>
          <button aria-label="Expand filters"><Double left /></button>
          <FilterGlyph width="15" height="15" viewBox="0 0 16 16" fill="none" stroke="#252423" strokeWidth="1.5"><path d="M14.500 1V15L8 10H1V6H8Z" /></FilterGlyph>
          <FiltersTitle>Filters</FiltersTitle>
        </Filters>
        <VisualizationsPane />
        <DataPane />

        <Callout $top={134} $right={529} $w={179} $h={119} $pad={10}>
          <strong>STEP 1</strong>Choose slicer<br />visualisation.
          <Pointer $side viewBox="0 0 10 10">
            <path d="M-1 66L137 139L-1 97Z" fill={c.callout} />
            <path d="M1 67L137 139L1 97" fill="none" stroke={c.navy} strokeWidth="2" />
          </Pointer>
        </Callout>
        <Callout $top={586} $right={444} $w={389} $h={112} $pad={6} $bold>
          <strong>STEP 2</strong>For the field, choose ‘Year’ from<br />the dates table.
          <Pointer viewBox="0 0 10 10">
            <path d="M225 1L398 -156L322 1Z" fill={c.callout} />
            <path d="M226 -1L398 -156L321 -1" fill="none" stroke={c.navy} strokeWidth="2" />
          </Pointer>
        </Callout>
      </Shell>
    </>
  );
}
